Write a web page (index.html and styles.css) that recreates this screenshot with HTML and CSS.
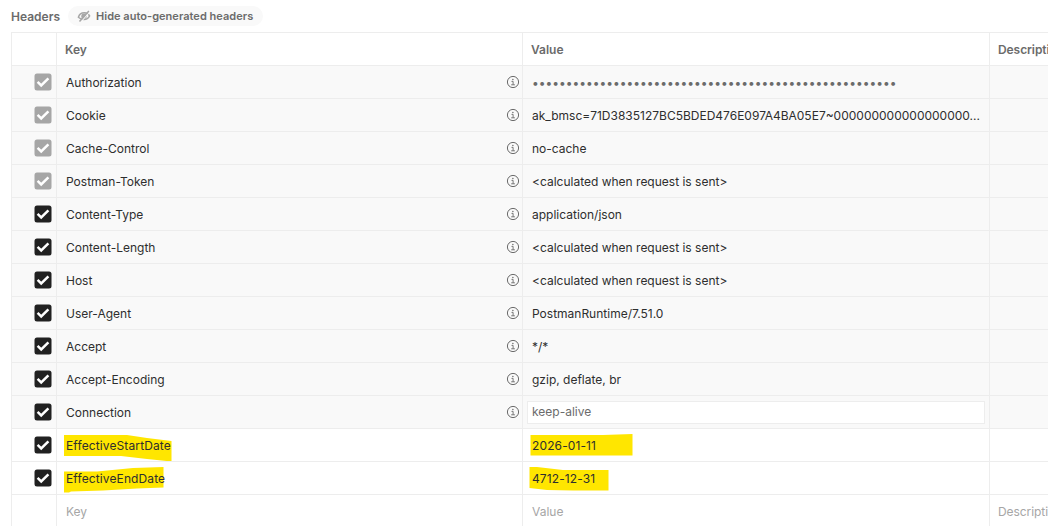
FILE: index.html
```html
<!DOCTYPE html>
<html lang="en">
<head>
  <meta charset="UTF-8" />
  <meta name="viewport" content="width=device-width, initial-scale=1.0"/>
  <title>Headers</title>
  <link rel="stylesheet" href="styles.css">
</head>
<body>
  <svg class="sprite" width="0" height="0">
    <symbol id="check" viewBox="0 0 18 18">
      <rect x="0.5" y="0.5" width="17" height="17" rx="2.5" fill="currentColor"/>
      <path d="M3.600 8.900l3.600 3.500 7.200-7" fill="none" stroke="#fff" stroke-width="2.500"/>
    </symbol>
    <symbol id="info" viewBox="0 0 14 14">
      <circle cx="7" cy="7" r="5.6" fill="none" stroke="currentColor"/>
      <path d="M5.5 6.4h1.6v3.4M5.2 9.8h3.7" fill="none" stroke="currentColor" stroke-width="0.9"/>
      <circle cx="6.9" cy="4.4" r="0.75" fill="currentColor"/>
    </symbol>
  </svg>

  <div class="toolbar">
    <span class="title">Headers</span>
    <button class="hide-btn">
      <svg width="14" height="14" viewBox="0 0 14 14">
        <path d="M1.400 8.300C2.300 5.200 4.800 3.700 7.600 3.800c2.200.1 3.900 1.200 5 3-1.300 2.600-3.300 3.800-5.900 3.700-2.100-.1-3.900-.9-5.300-2.200z" fill="none" stroke="currentColor" stroke-width="1.500"/>
        <circle cx="7" cy="7.200" r="2.700" fill="currentColor"/>
        <path d="M3.500 13.300L13.100 2.500" stroke="#f9f9f9" stroke-width="1.100"/>
        <path d="M2.500 12.600L11.900 1.900" stroke="currentColor" stroke-width="1.500"/>
      </svg>
      Hide auto-generated headers
    </button>
  </div>

  <div class="table">
    <div class="row head">
      <div class="cell"></div>
      <div class="cell">Key</div>
      <div class="cell">Value</div>
      <div class="cell">Description</div>
    </div>
    <div class="row auto">
      <div class="cell check locked"><svg><use href="#check"/></svg></div>
      <div class="cell key">Authorization<svg class="info"><use href="#info"/></svg></div>
      <div class="cell"><span class="secret">••••••••••••••••••••••••••••••••••••••••••••••••••••••</span></div>
      <div class="cell"></div>
    </div>
    <div class="row auto">
      <div class="cell check locked"><svg><use href="#check"/></svg></div>
      <div class="cell key">Cookie<svg class="info"><use href="#info"/></svg></div>
      <div class="cell">ak_bmsc=71D3835127BC5BDED476E097A4BA05E7~000000000000000000...</div>
      <div class="cell"></div>
    </div>
    <div class="row auto">
      <div class="cell check locked"><svg><use href="#check"/></svg></div>
      <div class="cell key">Cache-Control<svg class="info"><use href="#info"/></svg></div>
      <div class="cell">no-cache</div>
      <div class="cell"></div>
    </div>
    <div class="row auto">
      <div class="cell check locked"><svg><use href="#check"/></svg></div>
      <div class="cell key">Postman-Token<svg class="info"><use href="#info"/></svg></div>
      <div class="cell">&lt;calculated when request is sent&gt;</div>
      <div class="cell"></div>
    </div>
    <div class="row auto">
      <div class="cell check"><svg><use href="#check"/></svg></div>
      <div class="cell key">Content-Type<svg class="info"><use href="#info"/></svg></div>
      <div class="cell">application/json</div>
      <div class="cell"></div>
    </div>
    <div class="row auto">
      <div class="cell check"><svg><use href="#check"/></svg></div>
      <div class="cell key">Content-Length<svg class="info"><use href="#info"/></svg></div>
      <div class="cell">&lt;calculated when request is sent&gt;</div>
      <div class="cell"></div>
    </div>
    <div class="row auto">
      <div class="cell check"><svg><use href="#check"/></svg></div>
      <div class="cell key">Host<svg class="info"><use href="#info"/></svg></div>
      <div class="cell">&lt;calculated when request is sent&gt;</div>
      <div class="cell"></div>
    </div>
    <div class="row auto">
      <div class="cell check"><svg><use href="#check"/></svg></div>
      <div class="cell key">User-Agent<svg class="info"><use href="#info"/></svg></div>
      <div class="cell">PostmanRuntime/7.51.0</div>
      <div class="cell"></div>
    </div>
    <div class="row auto">
      <div class="cell check"><svg><use href="#check"/></svg></div>
      <div class="cell key">Accept<svg class="info"><use href="#info"/></svg></div>
      <div class="cell">*/*</div>
      <div class="cell"></div>
    </div>
    <div class="row auto">
      <div class="cell check"><svg><use href="#check"/></svg></div>
      <div class="cell key">Accept-Encoding<svg class="info"><use href="#info"/></svg></div>
      <div class="cell">gzip, deflate, br</div>
      <div class="cell"></div>
    </div>
    <div class="row auto">
      <div class="cell check"><svg><use href="#check"/></svg></div>
      <div class="cell key">Connection<svg class="info"><use href="#info"/></svg></div>
      <div class="cell edit"><div class="field">keep-alive</div></div>
      <div class="cell"></div>
    </div>
    <div class="row">
      <div class="cell check"><svg><use href="#check"/></svg></div>
      <div class="cell key">
        <svg class="marker" width="120" height="33"><path d="M7 6H70L90 9 114.500 12V32.500L90 30 64 27H7z"/></svg>
        <span>EffectiveStartDate</span>
      </div>
      <div class="cell">
        <svg class="marker" width="120" height="33"><path d="M7.500 6H80L109.500 5V26.500H7.500z"/></svg>
        <span>2026-01-11</span>
      </div>
      <div class="cell"></div>
    </div>
    <div class="row">
      <div class="cell check"><svg><use href="#check"/></svg></div>
      <div class="cell key">
        <svg class="marker" width="120" height="33"><path d="M7 9.500H40L76 6 106.500 5V25.500L80 26.500 46 28.500 14 29.500 12 30.500H7z"/></svg>
        <span>EffectiveEndDate</span>
      </div>
      <div class="cell">
        <svg class="marker" width="120" height="33"><path d="M6.500 5H14L40 8H85.500V28.500H50L24 28 6.500 26z"/></svg>
        <span>4712-12-31</span>
      </div>
      <div class="cell"></div>
    </div>
    <div class="row empty">
      <div class="cell"></div>
      <div class="cell">Key</div>
      <div class="cell">Value</div>
      <div class="cell">Description</div>
    </div>
  </div>
</body>
</html>
```
FILE: styles.css
```css
body {
  margin: 0;
  height: 526px;
  font-family: Inter, sans-serif;
  font-size: 12px;
  line-height: 16px;
  background: #fff;
  color: #2e2e2e;
  overflow: hidden;
}
.sprite {
  display: none;
}
.toolbar {
  display: flex;
  align-items: center;
  gap: 8px;
  height: 32px;
  padding-left: 11px;
  color: #6b6b6b;
  font-weight: 600;
}
.title {
  padding-top: 1px;
}
.hide-btn {
  display: flex;
  align-items: center;
  gap: 5px;
  height: 20px;
  padding: 0 10px 0 9px;
  border: none;
  border-radius: 10px;
  background: #f9f9f9;
  color: #6b6b6b;
  font: inherit;
  font-size: 11px;
  letter-spacing: 0.03px;
}
.hide-btn svg {
  color: #a6a6a6;
}
.table {
  margin-left: 11px;
  overflow: hidden;
}
.row {
  display: grid;
  grid-template-columns: 45px 466px 467px minmax(0, 1fr);
  height: 33px;
}
.cell {
  position: relative;
  display: flex;
  align-items: center;
  padding: 2px 9px 0;
  border-top: 1px solid #ededed;
  border-left: 1px solid #ededed;
  box-sizing: border-box;
  white-space: nowrap;
}
.head .cell {
  padding-left: 8px;
  color: #6b6b6b;
  font-weight: 600;
}
.head .cell:last-child,
.empty .cell:last-child {
  padding-left: 8px;
  letter-spacing: -0.07px;
  overflow: hidden;
  padding-right: 0;
}
.auto .cell {
  background: #f9f9f9;
}
.empty .cell {
  color: #a6a6a6;
}
.check {
  justify-content: flex-end;
  padding: 0 4px 0 0;
  color: #212121;
}
.check svg {
  width: 18px;
  height: 18px;
}
.locked {
  color: #a6a6a6;
}
.key {
  justify-content: space-between;
  padding-right: 2px;
}
.info {
  width: 14px;
  height: 14px;
  margin-top: -2px;
  color: #6b6b6b;
}
.secret {
  color: #6b6b6b;
  margin-top: -1px;
}
.edit {
  padding: 0 4px;
}
.field {
  flex: 1;
  height: 23px;
  padding: 2px 0 0 4px;
  border: 1px solid #ededed;
  box-sizing: border-box;
  background: #fff;
  color: #6b6b6b;
}
/* highlighter strokes sit behind the cell text */
.marker {
  position: absolute;
  top: 0;
  left: 0;
  fill: #ffe600;
}
.marker + span {
  position: relative;
  letter-spacing: 0.12px;
}
```
